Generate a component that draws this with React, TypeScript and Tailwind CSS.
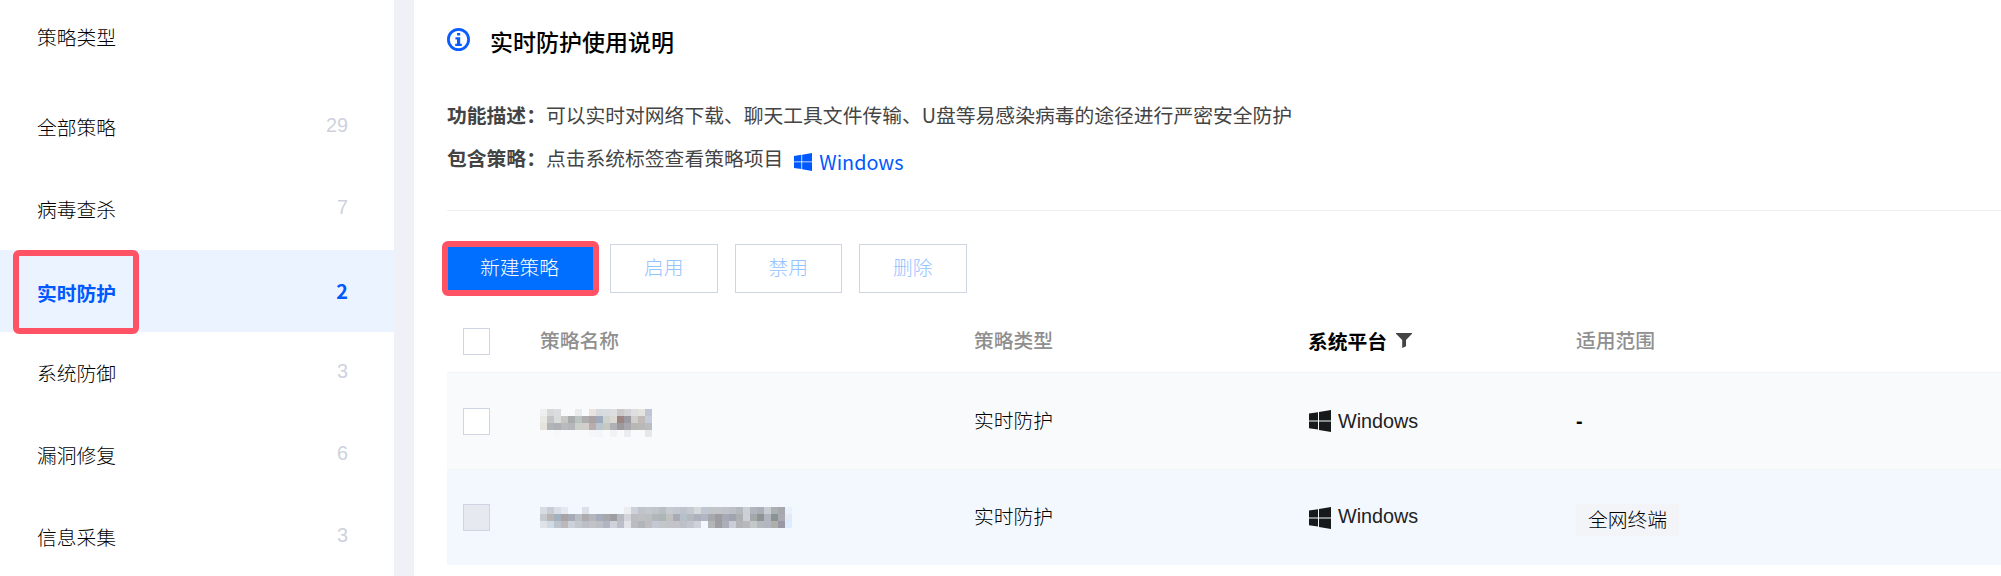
import clsx from "clsx"

const sidebarItems = [
  { name: "全部策略", count: 29 },
  { name: "病毒查杀", count: 7 },
  { name: "实时防护", count: 2, active: true },
  { name: "系统防御", count: 3 },
  { name: "漏洞修复", count: 6 },
  { name: "信息采集", count: 3 },
]

// Pixelated policy names, one colour per block, "." is an empty block
const maskedRow1 = [
  "#eeefef #d6d8da #dadddf . . #e9ecec . #e9e2df #d4dade #d8dce0 #dcdedf #ccc7c9 #d3d2d6 #dfdfe1 #e5e3de #bdc6d2",
  "#e9e8e4 #c3c4c6 #dadbdc #c8c7c4 #aaabad #bbc4c3 #aeadb0 #aaa3a2 #a0aabc #cdd3cf #dbd9d2 #9c8684 #9b99a2 #d2cecc #c0bbb8 #c5cddb",
  "#e5e3db #b2b5b8 #adb1b5 #bababa #b3b7b9 #cdcfc9 #d2cecb #b8adac #b9c6d0 #c7c9bf #b0b1b7 #9e999d #a9a8ae #b9b7b3 #bbb9b8 #bbbcbe",
  ". . #f7f8f9 . . . . #f6f5f7 #f4f5f8 . #f2f3f5 . #ebecef . . #e6e7e9",
]
const maskedRow2 = [
  "#d7dce2 #c9cdd3 #d9dde5 #e4e8f1 . . #dbe0e9 . . . . . #ebedf1 #cdd1d9 #bfc4ca #c3c8cc #c0c5ca #b8bfc0 #c6cbd1 #c4c8ce #bfc3cb #c5c9d1 #d5d9dc #bfc7d2 #c2c5ca #c2c5c9 #c0c3c9 #bdc0c5 #b5b8bc #cbd0d7 #b1b5bd #abafb6 #c8ccd3 #abb1b2 #a6a7ad #e7f0fd",
  "#c6c9ce #b8b5b2 #a3b1bf #aaa3a5 #a6abb6 #b7bfc5 #aeabaf #b3b6bc #a4adb9 #a7a8ab #9d9da2 #b5bac3 #d2d6dc #bbbdc0 #bfc0c3 #bcbec2 #b0b7b9 #acb6b7 #c0c2c0 #a8aab5 #b6c0c9 #b6b8bf #adb1bb #b2b6c4 #a6a8ab #9c9da0 #a7aab5 #a0a4ae #acb0b1 #cdd0d8 #a3a8a8 #8c9494 #b2b4bf #8a9393 #a9aab1 #e3eaf5",
  "#dfe2e6 #d0dae4 #bcc4cc #bbb9bb #ccd0d9 #c3c7ce #bcbfc5 #c2c3c7 #bcbfc5 #b1b5c3 #cfd2da #bbbfca #e0e3e8 #bbbcc0 #b2b5ba #bcbec2 #c4c9d1 #c2c7ca #c2c4c9 #c3c4ca #bec0c8 #c4c6cd #cfd2d8 . #b3b5b7 #9d9ea2 #aaafba #cacdd7 #b2b5b8 #b7b9bd #c3c9c9 #b4b8bf #b3b6c0 #adb0aa #9b97a4 #dbedff",
]

const rows = [
  { masked: maskedRow1, type: "实时防护", platform: "Windows", scope: "", disabled: false },
  { masked: maskedRow2, type: "实时防护", platform: "Windows", scope: "全网终端", disabled: true },
]

const WindowsIcon = ({ className }: { className?: string }) => (
  <svg className={className} viewBox="0 0 22 22" fill="currentColor">
    <path d="M0 3.6 9 2.2V10.4H0zM10 2 22 0V10.4H10zM0 11.4H9V19.6L0 18.2zM10 11.4H22V22L10 19.9z" />
  </svg>
)

const InfoIcon = () => (
  <svg className="h-[23px] w-[23px] text-[#0a5cff]" viewBox="0 0 23 23" fill="none">
    <circle cx="11.5" cy="11.5" r="10.1" stroke="currentColor" strokeWidth="2.8" />
    <path d="M10 5h3.2v2.6H10zM8.4 9.2h4.8v6.6h1.6v2.2H8.2v-2.2h1.8v-4.4H8.4z" fill="currentColor" />
  </svg>
)

const FilterIcon = () => (
  <svg className="h-[15px] w-4 text-[#444]" viewBox="0 0 16 15" fill="currentColor">
    <path d="M0 0h16v.8L10 7v6.2L6.2 15V7L0 .8z" />
  </svg>
)

function MaskedText({ blocks }: { blocks: string[] }) {
  return (
    <div className="flex flex-col">
      {blocks.map((line, i) => (
        <div key={i} className="flex">
          {line.split(" ").map((color, j) => (
            <span
              key={j}
              className="size-[7px]"
              style={{ backgroundColor: color === "." ? "transparent" : color }}
            />
          ))}
        </div>
      ))}
    </div>
  )
}

function Sidebar() {
  return (
    <aside className="w-[394px] shrink-0 bg-white">
      <div className="flex h-[86px] items-start pt-[22px] pl-[37px] font-light text-black">策略类型</div>
      {sidebarItems.map((item) => (
        <div
          key={item.name}
          className={clsx(
            "relative flex h-[82px] items-center justify-between pr-[46px] pl-[37px]",
            item.active ? "bg-[#eaf3ff] pt-1 font-bold text-[#0058ff]" : "pb-px font-light text-black"
          )}
        >
          <span>{item.name}</span>
          <span
            className={clsx(
              "-mt-1",
              !item.active && "font-[Liberation_Sans] font-normal text-[#cdd2dd]"
            )}
          >
            {item.count}
          </span>
          {item.active && (
            <div className="absolute top-0 left-[13px] h-[84px] w-[126px] rounded-md border-6 border-[#ff5264]" />
          )}
        </div>
      ))}
    </aside>
  )
}

export default function App() {
  return (
    <div className="flex h-[576px] w-[2001px] overflow-hidden bg-[#eff1f6] font-['Noto_Sans_CJK_SC',sans-serif] text-[19.8px] leading-[30px]">
      <Sidebar />

      <main className="ml-5 flex-1 bg-white pl-[33px]">
        {/* Description */}
        <div className="flex h-[84px] items-start pt-7">
          <InfoIcon />
          <h1 className="-mt-0.5 ml-5 text-[23px] font-medium text-black">实时防护使用说明</h1>
        </div>
        <div className="h-[127px] border-b border-[#eee] pt-4 text-[#444]">
          <p>
            <b>功能描述：</b>可以实时对网络下载、聊天工具文件传输、U盘等易感染病毒的途径进行严密安全防护
          </p>
          <div className="mt-[13px] flex">
            <b>包含策略：</b>点击系统标签查看策略项目
            <span className="mt-1 ml-[11px] flex items-center text-[#0058ff]">
              <WindowsIcon className="mr-[7px] h-[18px] w-[18px]" />
              Windows
            </span>
          </div>
        </div>

        {/* Toolbar */}
        <div className="flex h-[98px] items-start pt-[33px] font-light">
          <button className="relative h-[49px] w-[147px] pr-0.5 pb-1 text-white">
            <span className="absolute -top-[3px] -left-[5px] h-[55px] w-[157px] rounded-md border-6 border-[#ff5264] bg-[#006eff]" />
            <span className="relative">新建策略</span>
          </button>
          <div className="ml-4 flex gap-[17px]">
            {["启用", "禁用", "删除"].map((label) => (
              <button key={label} className="h-[49px] w-[107.5px] border border-[#cfd5e2] pb-1 text-[#95c3ff]">
                {label}
              </button>
            ))}
          </div>
        </div>

        {/* Table */}
        <div className="grid h-16 grid-cols-[93px_434px_334px_268px_1fr] items-center border-b border-[#f2f3f5] font-medium text-[#8f8f8f]">
          <span className="mt-px ml-4 size-[27px] border border-[#cfd5e2] bg-white" />
          <span className="-mt-px">策略名称</span>
          <span className="-mt-px">策略类型</span>
          <span className="flex items-center gap-[9px] font-bold text-black">
            系统平台
            <FilterIcon />
          </span>
          <span className="-mt-px">适用范围</span>
        </div>
        {rows.map((row) => (
          <div
            key={row.platform + row.scope}
            className={clsx(
              "grid grid-cols-[93px_434px_334px_268px_1fr] items-center text-black",
              row.disabled ? "h-[95px] bg-[#f3f8ff]" : "h-[97px] border-b border-[#f2f3f5] bg-[#f9fafc]"
            )}
          >
            <span
              className={clsx("ml-4 size-[27px] border border-[#cfd5e2]", row.disabled ? "bg-[#e6eaf0]" : "bg-white")}
            />
            <div className={row.disabled ? "" : "pt-1"}>
              <MaskedText blocks={row.masked} />
            </div>
            <span className="-mt-[3px] font-light">{row.type}</span>
            <span className="ml-px flex items-center gap-[7px] font-[Liberation_Sans] text-[#222]">
              <WindowsIcon className="h-[22px] w-[22px] text-[#171a1a]" />
              <span className={row.disabled ? "-mt-[3px]" : "-mt-px"}>{row.platform}</span>
            </span>
            {row.scope ? (
              <span className="mt-1 w-fit bg-[#f3f4f8] px-3 pb-0.5 font-light">{row.scope}</span>
            ) : (
              <span className="font-[Liberation_Sans] font-bold">-</span>
            )}
          </div>
        ))}
      </main>
    </div>
  )
}
